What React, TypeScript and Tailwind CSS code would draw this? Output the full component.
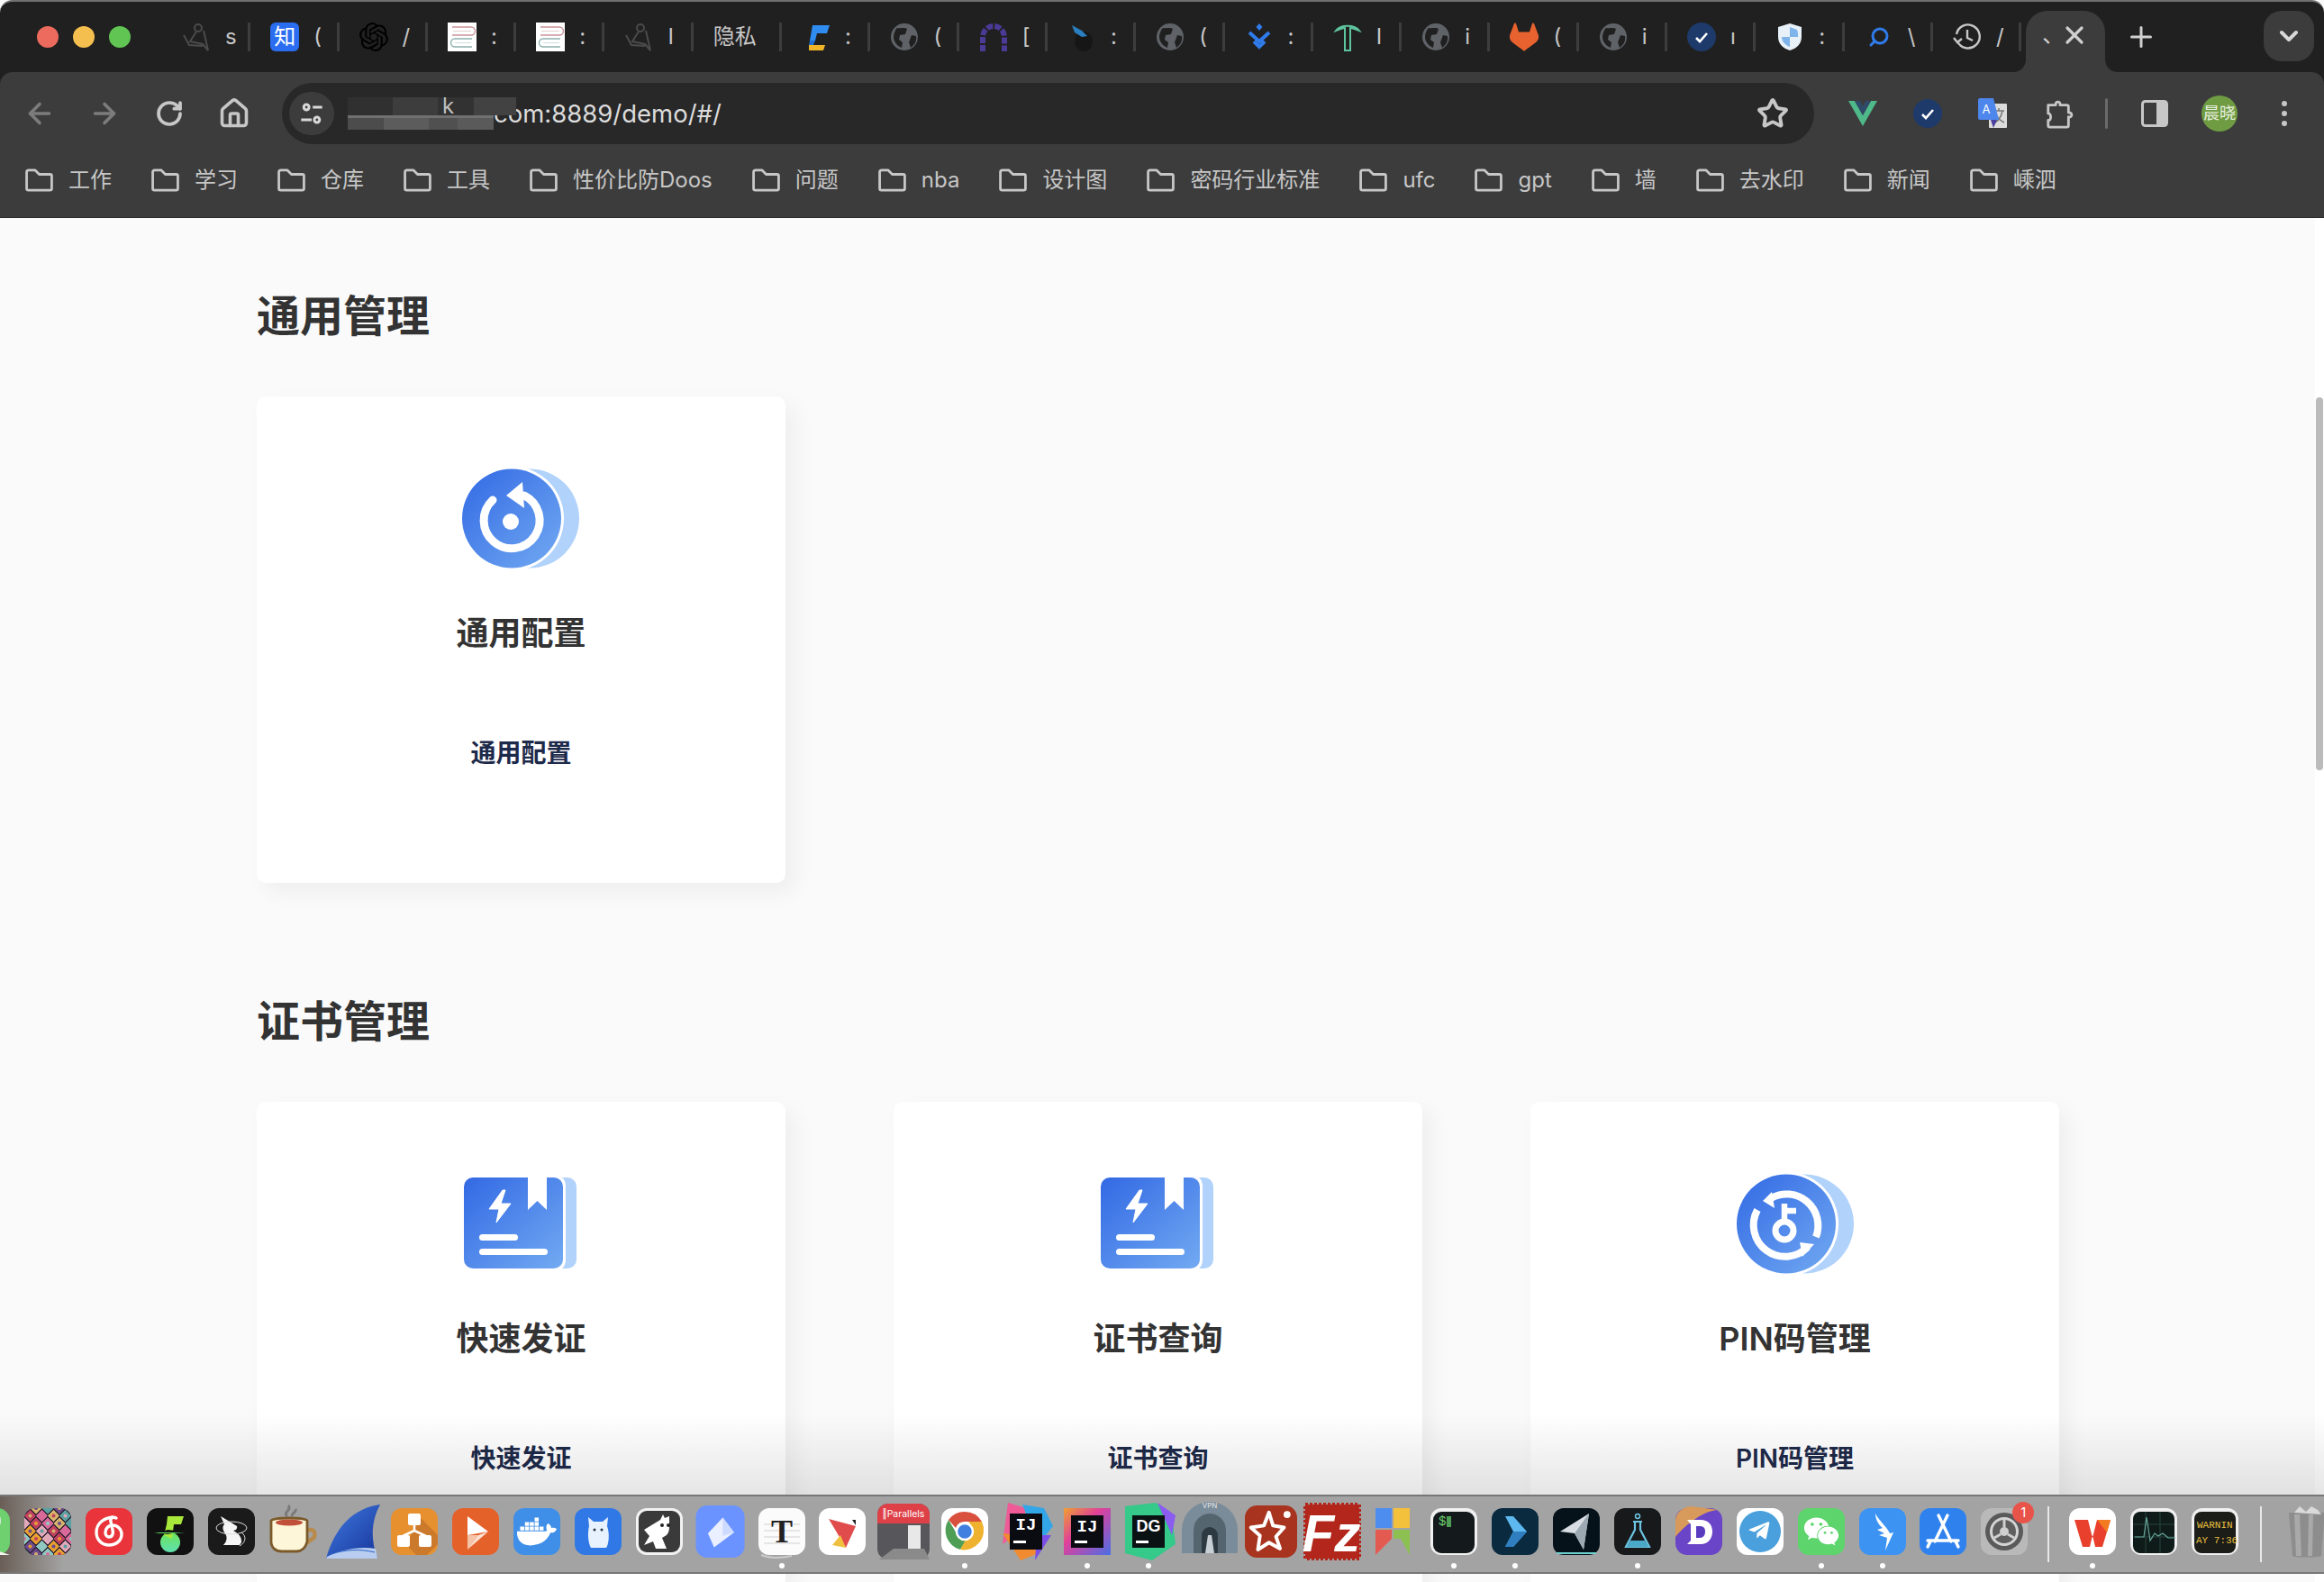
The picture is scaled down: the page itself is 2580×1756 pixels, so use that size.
import type { ReactNode } from "react";
import { ArrowLeft, ArrowRight, ChevronDown, Home, Plus, RotateCw, Search, Star, X } from "lucide-react";
import { FaDocker, FaTelegramPlane, FaWeixin } from "react-icons/fa";
import { SiGitlab, SiOpenai } from "react-icons/si";

const Globe = () => (
  <svg viewBox="0 0 32 32" className="h-8 w-8">
    <circle cx="16" cy="16" r="15" fill="#5f6368" />
    <path d="M8 6c4 1 8-1 11 1l-2 6-6 1-1 5 4 3-1 6c-5-2-9-7-9-12 0-4 2-8 4-10zM24 14l5 1c1 6-2 10-6 13l-2-6 3-8z" fill="#202020" />
  </svg>
);

const Bird = () => (
  <svg viewBox="0 0 32 32" className="h-8 w-8" fill="none" stroke="#4b4b4b" strokeWidth="2">
    <circle cx="18" cy="6" r="4" />
    <path d="M16 10 9 21l14 3 6 7-5-22M2 14l6 11 15 1" />
  </svg>
);

const Books = () => (
  <svg viewBox="0 0 32 32" className="h-8 w-8">
    <rect width="32" height="32" fill="#fff" />
    <path d="M5 5h21a3.500 3.500 0 0 1 0 9H5" fill="none" stroke="#c9939b" strokeWidth="1.400" />
    <path d="M6 9.500h20" fill="none" stroke="#e4d0d3" strokeWidth="1" />
    <path d="M27 18H8a3.500 3.500 0 0 0 0 9h19" fill="none" stroke="#8fb0ae" strokeWidth="1.400" />
    <path d="M8 22.500h18" fill="none" stroke="#d0dedd" strokeWidth="1" />
  </svg>
);

const CheckBadge = ({ size = "h-8 w-8" }: { size?: string }) => (
  <svg viewBox="0 0 32 32" className={size}>
    <circle cx="16" cy="16" r="16" fill="#1e3a6b" />
    <path d="m10 17 4 4 8-9" fill="none" stroke="#fff" strokeWidth="2.600" />
  </svg>
);

const tabs: { icon: ReactNode; text: string }[] = [
  { icon: <Bird />, text: "s" },
  {
    icon: (
      <span className="flex h-8 w-8 items-center justify-center rounded-[6px] bg-[#2b6df0] text-[24px] leading-none text-white">知</span>
    ),
    text: "(",
  },
  { icon: <SiOpenai className="h-8 w-8 text-black" />, text: "/" },
  { icon: <Books />, text: ":" },
  { icon: <Books />, text: ":" },
  { icon: <Bird />, text: "I" },
  { icon: <span className="block w-[52px] whitespace-nowrap text-[24px] leading-8 text-[#c7c7c7]">隐私</span>, text: "" },
  {
    icon: (
      <svg viewBox="0 0 32 32" className="h-8 w-8">
        <path d="M12 3h19l-3 9H17l-2 8h-6z" fill="#2f8cf0" />
        <path d="m9 20h6l-2 5H8z" fill="#1f6fd0" />
        <path d="M8 25h18l-2 6H8z" fill="#f0b429" />
      </svg>
    ),
    text: ":",
  },
  { icon: <Globe />, text: "(" },
  {
    icon: (
      <svg viewBox="0 0 32 32" className="h-8 w-8" fill="none" stroke="#4b3a96" strokeWidth="6">
        <path d="M4 32V16a12 12 0 0 1 24 0v16" strokeDasharray="7 2" />
      </svg>
    ),
    text: "[",
  },
  {
    icon: (
      <svg viewBox="0 0 32 32" className="h-8 w-8">
        <ellipse cx="18" cy="21" rx="10" ry="11" fill="#161616" />
        <path d="M5 3l11 6 6 6-6 1-8-5z" fill="#2a7fc0" />
      </svg>
    ),
    text: ":",
  },
  { icon: <Globe />, text: "(" },
  {
    icon: (
      <svg viewBox="0 0 32 32" className="h-8 w-8" fill="none" stroke="#2f7bea" strokeWidth="4">
        <path d="m16 1 3.500 4-3.500 4-3.500-4z" fill="#2f7bea" stroke="none" />
        <path d="M5 11l11 10 11-10M10 21l6 6 6-6" />
      </svg>
    ),
    text: ":",
  },
  {
    icon: (
      <svg viewBox="0 0 32 32" className="h-8 w-8" fill="none" stroke="#5fc5a0" strokeWidth="2">
        <path d="M3 9c5-7 21-7 26 0-5-2-8-3-10-3v25h-6V6c-2 0-5 1-10 3z" />
      </svg>
    ),
    text: "I",
  },
  { icon: <Globe />, text: "i" },
  { icon: <SiGitlab className="h-8 w-8 text-[#e8622f]" />, text: "(" },
  { icon: <Globe />, text: "i" },
  { icon: <CheckBadge />, text: "ı" },
  {
    icon: (
      <svg viewBox="0 0 32 32" className="h-8 w-8">
        <path d="M16 1 29 5v11c0 8-6 13-13 15C9 29 3 24 3 16V5z" fill="#e8f0f8" />
        <path d="M16 5v11h9c0-3 0-6-1-8zM16 16H7c0 5 4 9 9 11z" fill="#7fb4ea" />
      </svg>
    ),
    text: ":",
  },
  {
    icon: (
      <span className="flex h-8 w-8 items-center justify-center">
        <Search className="h-6 w-6 -scale-x-100 text-[#2f7bea]" strokeWidth={3} />
      </span>
    ),
    text: "\\",
  },
  {
    icon: (
      <svg viewBox="0 0 32 32" className="h-8 w-8" fill="none" stroke="#c7c7c7" strokeWidth="2.400">
        <path d="M5 21a13 13 0 1 0-1-8M1 17l4 5 5-4M16 8v9l6 3" />
      </svg>
    ),
    text: "/",
  },
];

const bookmarks = ["工作", "学习", "仓库", "工具", "性价比防Doos", "问题", "nba", "设计图", "密码行业标准", "ufc", "gpt", "墙", "去水印", "新闻", "嵊泗"];

const Folder = () => (
  <svg viewBox="0 0 34 28" className="h-[26px] w-[33px] shrink-0" fill="none" stroke="#c7c7c7" strokeWidth="3">
    <path d="M2 4.500A2.500 2.500 0 0 1 4.500 2H12l5 5h13a2 2 0 0 1 2 2v15a2 2 0 0 1-2 2H4a2 2 0 0 1-2-2z" strokeLinejoin="round" />
  </svg>
);

function Tile({ bg, children, rx = 12 }: { bg: string; children?: ReactNode; rx?: number }) {
  return (
    <svg viewBox="0 0 52 52" className="h-[52px] w-[52px] overflow-visible">
      <rect x="0" y="0" width="52" height="52" rx={rx} fill={bg} />
      {children}
    </svg>
  );
}

const quilt = ["#d86a9a", "#e8a030", "#5aa0a0", "#c04060", "#8fc8c0", "#d6b26a", "#e0a8b8", "#6a4a8a"];

const Quilt = () => (
  <svg viewBox="0 0 52 52" className="h-[52px] w-[52px]">
    <defs>
      <clipPath id="quilt-clip">
        <rect width="52" height="52" rx="12" />
      </clipPath>
    </defs>
    <g clipPath="url(#quilt-clip)">
      <rect width="52" height="52" fill="#33243c" />
      {[0, 1, 2, 3, 4, 5, 6].map((r) =>
        [0, 1, 2, 3, 4].map((c) => {
          const x = c * 13 + (r % 2 ? 6.5 : 0);
          const y = r * 8.5;
          return (
            <g key={`${r}-${c}`}>
              <path d={`M${x} ${y - 7}l7 7-7 7-7-7z`} fill={quilt[(r * 3 + c * 5) % 8]} stroke="#2a1f30" strokeWidth="0.800" />
              <circle cx={x} cy={y} r="2" fill={quilt[(r + c * 3 + 4) % 8]} />
            </g>
          );
        }),
      )}
    </g>
  </svg>
);

const dockApps: { node: ReactNode; dot?: boolean }[] = [
  {
    node: (
      <Tile bg="#6fd06f" rx={14}>
        <path d="M0 34 52 52H20L0 42z" fill="#f5f5ef" />
        <circle cx="30" cy="14" r="12" fill="#dfe8df" />
      </Tile>
    ),
  },
  { node: <Quilt /> },
  {
    node: (
      <Tile bg="#e8343a">
        <path d="M30 10c-9 1-18 6-18 17 0 9 7 14 14 14 8 0 14-5 14-12 0-6-5-10-10-10-5 0-8 4-8 8 0 3 2 5 4 5 4 0 5-4 4-8l-2-9c-1-4 2-6 6-4" fill="none" stroke="#fff" strokeWidth="3.400" strokeLinecap="round" />
      </Tile>
    ),
  },
  {
    node: (
      <Tile bg="#111">
        <defs>
          <linearGradient id="note-g" x1="0" y1="0" x2="0" y2="1">
            <stop offset="0" stopColor="#6ee45a" />
            <stop offset="1" stopColor="#5fe0b0" />
          </linearGradient>
        </defs>
        <circle cx="26" cy="38" r="11" fill="url(#note-g)" />
        <path d="M23 9h18l-3 9h-8l-2 16-9-4 3-12z" fill="#a8e83a" />
        <path d="M8 27l12-2 3-1 20 2-14 2-6 1z" fill="#111" />
        <path d="M8 27h35l-14 1H14z" fill="#62e06a" />
      </Tile>
    ),
  },
  {
    node: (
      <Tile bg="#1a1a1a">
        <path d="M14 9 24 15 32 20Q33 24 28 25 38 30 37 38L35 41H17Q22 36 20 30 14 22 18 18z" fill="#f5f5f5" />
        <ellipse cx="26" cy="22" rx="17" ry="7" fill="none" stroke="#ddd" strokeWidth="1" />
        <path d="M37 27c6 4 5 11-2 15" fill="none" stroke="#ddd" strokeWidth="1" />
      </Tile>
    ),
  },
  {
    node: (
      <svg viewBox="0 0 52 52" className="h-[52px] w-[52px] overflow-visible">
        <path d="M21 9c-6-4 6-7 1-12M27 9c-3-3 5-4 3-8" fill="none" stroke="#7a7a7a" strokeWidth="3" />
        <path d="M42 24h5c6 0 6 9 0 11l-6 5" fill="none" stroke="#b88a4c" strokeWidth="4.500" />
        <path d="M3 14c3-4 37-4 40 0v23c-2 8-7 11-12 11H15C8 48 3 44 3 37z" fill="#fdf6d8" stroke="#7b5a2a" strokeWidth="2.800" />
        <ellipse cx="23" cy="16" rx="15" ry="3.500" fill="#c0503a" />
      </svg>
    ),
  },
  {
    node: (
      <svg viewBox="0 0 60 60" className="h-[60px] w-[60px] overflow-visible">
        <defs>
          <linearGradient id="fin-g" x1="0" y1="0" x2="1" y2="1">
            <stop offset="0" stopColor="#3f7ce0" />
            <stop offset="1" stopColor="#17339a" />
          </linearGradient>
        </defs>
        <path d="M60 0C30 4 10 25 0 60H57C50 40 49 20 60 0z" fill="url(#fin-g)" />
        <path d="M1 58C16 50 38 46 55 49L57 60H0z" fill="#b8cdf0" />
        <path d="M6 55C20 50 38 49 54 53" fill="none" stroke="#2a61c8" strokeWidth="1" />
      </svg>
    ),
  },
  {
    node: (
      <Tile bg="#e6902f">
        <path d="M26 22 17 41l11 11h12l12-12V30L33 11z" fill="#bf6f2a" opacity=".7" />
        <path d="M26 18v7M26 25 13 31M26 25l13 6" stroke="#fff" strokeWidth="2.500" />
        <rect x="19" y="6" width="14" height="13" rx="2" fill="#fff" />
        <rect x="7" y="30" width="14" height="13" rx="2" fill="#fff" />
        <rect x="31" y="30" width="14" height="13" rx="2" fill="#fff" />
      </Tile>
    ),
  },
  {
    node: (
      <Tile bg="#e5612a">
        <path d="M17 9 40 26 17 30z" fill="#fff" />
        <path d="M17 30 29 30 17 46z" fill="#f5c4a8" />
        <path d="M29 30 40 26 17 46z" fill="#fbe2d2" />
      </Tile>
    ),
  },
  {
    node: (
      <span className="flex h-[52px] w-[52px] items-center justify-center rounded-[12px] bg-[#3f8fe8] text-white">
        <FaDocker className="h-11 w-11" />
      </span>
    ),
  },
  {
    node: (
      <Tile bg="#2f78e6">
        <path d="M16 20 15 10l6 5h10l6-5-1 10c3 8 2 20-1 24H18c-3-5-4-16-2-24z" fill="#e8f2ff" />
        <circle cx="22" cy="24" r="1.500" fill="#234" />
        <circle cx="30" cy="24" r="1.500" fill="#234" />
      </Tile>
    ),
  },
  {
    node: (
      <Tile bg="#f2f2f2">
        <rect x="3" y="3" width="46" height="46" rx="9" fill="#3a3a3a" />
        <path d="M9 24 27 13l3-6 2 4 5-2v12c0 9-5 10-8 12l5 12H22l-3-8-10 4 6-10z" fill="#fff" />
        <circle cx="29" cy="19" r="2" fill="#222" />
        <circle cx="36" cy="19" r="2" fill="#222" />
      </Tile>
    ),
  },
  {
    node: (
      <svg viewBox="0 0 56 60" className="h-[58px] w-[55px] overflow-visible">
        <rect width="56" height="60" rx="13" fill="#6b93ff" />
        <path d="M31 14 44 31 21 48 14 32z" fill="#eaf0ff" />
        <path d="M31 14 44 31 31 35z" fill="#ccdbff" />
      </svg>
    ),
  },
  {
    node: (
      <Tile bg="#fbfbfb">
        <path d="M3 52c10 4 24 3 34 1" stroke="#ccc" fill="none" strokeWidth="2" />
        <path d="M6 18h40M6 25h40M6 32h40M6 39h40" stroke="#e6e6e6" strokeWidth="2" />
        <text x="26" y="38" textAnchor="middle" fontFamily="Liberation Serif, serif" fontSize="36" fontWeight="700" fill="#222">T</text>
      </Tile>
    ),
    dot: true,
  },
  {
    node: (
      <Tile bg="#fff">
        <path d="M11 12 41 20l-11 24z" fill="#e04c4c" />
        <path d="M24 30 30 44 15 41z" fill="#f0c040" />
        <path d="M37 13h4v6z" fill="#222" />
      </Tile>
    ),
  },
  {
    node: (
      <svg viewBox="0 0 58 62" className="h-[62px] w-[58px] overflow-visible">
        <rect width="58" height="62" rx="12" fill="#57575b" />
        <path d="M0 12a12 12 0 0 1 12-12h34a12 12 0 0 1 12 12v10H0z" fill="#de4048" />
        <text x="29" y="15" textAnchor="middle" fontFamily="Inter, sans-serif" fontSize="10.500" fill="#fff">‖Parallels</text>
        <rect x="34" y="24" width="14" height="26" fill="#e8e8e8" />
        <path d="M2 62 18 50h34l6 12z" fill="#8a8a8a" />
      </svg>
    ),
  },
  {
    node: (
      <Tile bg="#fff">
        <path d="M26 4a22 22 0 0 1 19 11H26a11 11 0 0 0-10 7L8 13A22 22 0 0 1 26 4z" fill="#d9503f" />
        <path d="M8 13l10 17a10 10 0 0 0 9 6l-6 10A22 22 0 0 1 8 13z" fill="#4f9e55" />
        <path d="M45 15a22 22 0 0 1-24 31l9-16a10 10 0 0 0 0-15z" fill="#eeb22f" />
        <circle cx="26" cy="26" r="9" fill="#3f7fe0" stroke="#fff" strokeWidth="2.500" />
      </Tile>
    ),
    dot: true,
  },
  {
    node: (
      <svg viewBox="0 0 52 52" className="h-[52px] w-[52px] overflow-visible">
        <path d="M6-6 26 0 20 26 0 40z" fill="#ef5b97" />
        <path d="M22-4 46 0 56 20 40 40z" fill="#33a6e8" />
        <path d="M0 28 20 58 40 50 20 30z" fill="#f28b30" />
        <path d="M38 30 54 30 36 58z" fill="#7a4fe8" />
        <rect x="8" y="6" width="36" height="40" fill="#0b0b12" />
        <text x="26" y="24" textAnchor="middle" fontFamily="Liberation Mono, monospace" fontSize="19" fontWeight="700" fill="#fff">IJ</text>
        <rect x="12" y="36" width="14" height="3" fill="#fff" />
      </svg>
    ),
  },
  {
    node: (
      <svg viewBox="0 0 52 52" className="h-[52px] w-[52px] overflow-visible">
        <rect x="0" y="0" width="52" height="52" fill="url(#ijg)" />
        <defs>
          <linearGradient id="ijg" x1="0" y1="0" x2="1" y2="1">
            <stop offset="0" stopColor="#f0a030" />
            <stop offset=".4" stopColor="#e0409a" />
            <stop offset="1" stopColor="#4a6fe8" />
          </linearGradient>
        </defs>
        <rect x="8" y="8" width="36" height="36" fill="#0b0b12" />
        <text x="26" y="26" textAnchor="middle" fontFamily="Liberation Mono, monospace" fontSize="19" fontWeight="700" fill="#fff">IJ</text>
        <rect x="12" y="36" width="14" height="3" fill="#fff" />
      </svg>
    ),
    dot: true,
  },
  {
    node: (
      <svg viewBox="0 0 52 52" className="h-[52px] w-[52px] overflow-visible">
        <path d="M0-2 34-6 52 8 56 40 30 58 0 50z" fill="#35c98a" />
        <path d="M36-6 56 8 52 30z" fill="#8b5cf0" />
        <rect x="8" y="8" width="36" height="36" fill="#0b1214" />
        <text x="26" y="26" textAnchor="middle" fontFamily="Liberation Sans, sans-serif" fontSize="18" fontWeight="700" fill="#fff">DG</text>
        <rect x="12" y="36" width="14" height="3" fill="#fff" />
      </svg>
    ),
    dot: true,
  },
  {
    node: (
      <svg viewBox="0 0 52 52" className="h-[52px] w-[52px] overflow-visible">
        <path d="M-5 50V24a31 31 0 0 1 62 0v26H44V24a18 18 0 0 0-36 0v26z" fill="#7a8c9a" />
        <path d="M8 50V24a18 18 0 0 1 36 0v26z" fill="#55656f" />
        <path d="M17 50V30a9 9 0 0 1 18 0v20z" fill="#2e3a42" />
        <path d="M21 50 24 30h4l3 20z" fill="#c8d0d6" />
        <text x="26" y="0" textAnchor="middle" fontFamily="Inter, sans-serif" fontSize="8" fill="#e5e5e5">VPN</text>
      </svg>
    ),
  },
  {
    node: (
      <svg viewBox="0 0 52 52" className="h-[58px] w-[58px] overflow-visible">
        <rect width="52" height="52" rx="12" fill="#a8341f" />
        <path d="M24 7l4 13 11 2-8 9 4 12-11-6-11 7 2-14-9-8 13-2z" fill="none" stroke="#fff" strokeWidth="3.500" strokeLinejoin="round" />
        <circle cx="42" cy="9" r="3.500" fill="#fff" />
      </svg>
    ),
  },
  {
    node: (
      <svg viewBox="0 0 64 64" className="h-[64px] w-[64px] overflow-visible">
        <rect x="2" y="2" width="60" height="60" fill="#b3261b" stroke="#b3261b" strokeWidth="4" strokeDasharray="3 2" />
        <text x="31" y="54" textAnchor="middle" fontFamily="Liberation Sans, sans-serif" fontStyle="italic" fontSize="58" fontWeight="700" fill="#fff">Fz</text>
      </svg>
    ),
  },
  {
    node: (
      <svg viewBox="0 0 38 52" className="h-[52px] w-[38px] overflow-visible">
        <rect x="0" y="0" width="18" height="22" fill="#4e8df0" />
        <rect x="20" y="0" width="18" height="22" fill="#f4c13d" />
        <path d="M0 24h18v10L0 52z" fill="#e35b50" />
        <path d="M20 24h18v28L28 34h-8z" fill="#8cc152" />
      </svg>
    ),
  },
  {
    node: (
      <Tile bg="#f0f0f0">
        <rect x="3" y="4" width="46" height="46" rx="9" fill="#141a1c" />
        <text x="9" y="19" fontFamily="Liberation Mono, monospace" fontSize="14" fill="#6fd06f">$</text>
        <rect x="18" y="9" width="5" height="12" fill="#4f9e55" />
      </Tile>
    ),
    dot: true,
  },
  {
    node: (
      <Tile bg="#0a2a40">
        <path d="M15 9h9l15 17-15 17h-9l9-17z" fill="#5cb8ef" />
        <path d="M15 43h9l15-17H24z" fill="#2f7fc0" />
      </Tile>
    ),
    dot: true,
  },
  {
    node: (
      <Tile bg="#06121a">
        <path d="M40 6 34 46 24 28 8 26z" fill="#d8dee4" />
        <path d="M40 6 34 46 24 28z" fill="#9ca8b2" />
        <path d="M4 50h44" stroke="#6fd0d0" strokeWidth="2" />
      </Tile>
    ),
  },
  {
    node: (
      <Tile bg="#17191b">
        <circle cx="26" cy="9" r="2.500" fill="none" stroke="#6cc4e0" strokeWidth="1.500" />
        <path d="M21 15h10M23 15v9L13 43h26L29 24v-9" fill="none" stroke="#6cc4e0" strokeWidth="2.200" />
        <path d="M18 36h16l4 7H14z" fill="#4aa8c8" />
      </Tile>
    ),
    dot: true,
  },
  {
    node: (
      <Tile bg="#6a45c8" rx={13}>
        <path d="M0 14C0 4 10-2 18-2l30 4c-18 0-40 20-48 30z" fill="#d89a5a" />
        <path d="M13 13h15c8 0 13 5 13 13s-5 14-13 14H13l4-4V18z" fill="#fff" />
        <path d="M23 20h4c4 0 6 2 6 6s-2 7-6 7h-4z" fill="#5a3dbf" />
      </Tile>
    ),
  },
  {
    node: (
      <Tile bg="#fff">
        <circle cx="26" cy="26" r="23" fill="#4aa0dc" />
        <FaTelegramPlane x="12" y="12" size={26} color="#fff" />
      </Tile>
    ),
  },
  {
    node: (
      <span className="flex h-[52px] w-[52px] items-center justify-center rounded-[12px] bg-[#5dd46c] text-white">
        <FaWeixin className="h-10 w-10" />
      </span>
    ),
    dot: true,
  },
  {
    node: (
      <Tile bg="#3d93f2">
        <path d="M18 6c4 8 12 14 16 22l4-1-9 20 2-14-9-3 6-2-8-4 6-2c-5-4-8-10-8-16z" fill="#fff" />
      </Tile>
    ),
    dot: true,
  },
  {
    node: (
      <Tile bg="#2f82ee">
        <path d="M31 8 17 37M21 8l14 29M9 36h34M9 43l3-6M43 43l-3-6" fill="none" stroke="#fff" strokeWidth="3.400" strokeLinecap="round" />
      </Tile>
    ),
  },
  {
    node: (
      <span className="relative block h-[52px] w-[52px]">
        <svg viewBox="0 0 52 52" className="h-[52px] w-[52px]">
          <rect width="52" height="52" rx="12" fill="#b9b9b9" />
          <circle cx="26" cy="26" r="21" fill="#5a5a5a" />
          <circle cx="26" cy="26" r="16" fill="#d4d4d4" />
          <circle cx="26" cy="26" r="13" fill="#5f5f5f" />
          <circle cx="26" cy="26" r="5" fill="#cfcfcf" />
          <path d="M26 13v8M15 33l7-4M37 33l-7-4" stroke="#cfcfcf" strokeWidth="3" />
        </svg>
        <span className="absolute -right-[7px] -top-[7px] flex h-6 w-6 items-center justify-center rounded-full bg-[#e9544a] text-[14px] leading-none text-white">1</span>
      </span>
    ),
  },
];

const dockApps2: { node: ReactNode; dot?: boolean }[] = [
  {
    node: (
      <Tile bg="#fff">
        <path d="M6 13h15l5 20 5-20h15l-9 30h-8l-3-13-3 13h-8z" fill="#e8402d" />
        <path d="M31 13h15l-4 14z" fill="#f27b22" />
      </Tile>
    ),
    dot: true,
  },
  {
    node: (
      <Tile bg="#f0f0f0">
        <rect x="3" y="4" width="46" height="46" rx="8" fill="#0e1b19" />
        <path d="M3 18h46M3 32h46M17 4v46M33 4v46" stroke="#28453f" strokeWidth="1" />
        <path d="M5 32h10l3-22 4 26 5-8 4 3 5-3 6 5h8" fill="none" stroke="#66a79a" strokeWidth="1.200" />
      </Tile>
    ),
  },
  {
    node: (
      <Tile bg="#f0f0f0">
        <rect x="3" y="4" width="46" height="46" rx="8" fill="#1c1c18" />
        <text x="6" y="22" fontFamily="Liberation Mono, monospace" fontSize="11" fill="#e8c040">WARNIN</text>
        <text x="5" y="39" fontFamily="Liberation Mono, monospace" fontSize="11" fill="#e8c040">AY 7:36</text>
      </Tile>
    ),
  },
];

const DockItem = ({ node, dot }: { node: ReactNode; dot?: boolean }) => (
  <div className="flex w-[67.9px] shrink-0 flex-col items-center">
    <div className="flex h-[52px] w-[52px] items-center justify-center [&>*]:shrink-0">{node}</div>
    {dot ? <span className="mt-[9px] h-[6px] w-[6px] rounded-full bg-white" /> : null}
  </div>
);

function Dock() {
  return (
    <div className="absolute bottom-[9px] left-0 right-0 h-[88px] overflow-hidden border-y-2 border-[#777] bg-[#a3a3a3]">
      <div className="absolute inset-y-0 left-0 w-[70px] bg-gradient-to-r from-[#6a5f57] to-[#a3a3a3]" />
      <div className="relative -ml-[49px] flex items-start pt-[13px]">
        {dockApps.map((a, i) => (
          <DockItem key={i} node={a.node} dot={a.dot} />
        ))}
        <div className="flex w-[30px] shrink-0 justify-center">
          <span className="h-[62px] w-[2px] -translate-y-[2px] bg-[#e8e8e8]" />
        </div>
        {dockApps2.map((a, i) => (
          <DockItem key={i} node={a.node} dot={a.dot} />
        ))}
        <div className="flex w-[34px] shrink-0 justify-center">
          <span className="h-[62px] w-[2px] -translate-y-[2px] bg-[#e8e8e8]" />
        </div>
        <div className="flex h-[58px] w-[68px] shrink-0 -translate-y-[4px] items-start justify-center">
          <svg viewBox="0 0 44 58" className="h-[60px] w-[44px]">
            <path d="M2 8h40l-4 48c-1 2-31 2-32 0z" fill="#8d8d8d" />
            <path d="M8 10h6l2 46h-6zM24 10h5l-1 46h-5z" fill="#a9a9a9" />
            <path d="M8 8l6-7 7 6 6-6 7 4 4 5z" fill="#d9d9d9" />
          </svg>
        </div>
      </div>
    </div>
  );
}

const Pad = ({ children }: { children: ReactNode }) => (
  <div className="flex w-[72px] shrink-0 items-center justify-center">{children}</div>
);

function Chrome() {
  return (
    <header className="shrink-0 rounded-t-[14px] border-t-2 border-[#6f6f6f] bg-[#202020]">
      {/* tab strip */}
      <div className="flex h-[78px] items-start">
        <div className="flex w-[180px] shrink-0 gap-4 pl-[41px] pt-[27px]">
          <span className="h-6 w-6 rounded-full bg-[#ec6a5e]" />
          <span className="h-6 w-6 rounded-full bg-[#f4bf4f]" />
          <span className="h-6 w-6 rounded-full bg-[#61c554]" />
        </div>
        {tabs.map((t, i) => (
          <div key={i} className="mt-[23px] flex h-8 w-[98.3px] shrink-0 items-center border-r-[3px] border-[#3d3d3d] pl-[22px]">
            {t.icon}
            <span className="ml-[16px] text-[24px] leading-8 text-[#c7c7c7]">{t.text}</span>
          </div>
        ))}
        <div className="relative ml-[5px] mt-[10px] flex h-[68px] w-[88px] shrink-0 items-start rounded-t-[24px] bg-[#3c3c3c] pl-[18px] pt-[11px] text-[#d0d0d0]">
          <span className="text-[24px] leading-8">、</span>
          <X className="-ml-[4px] h-8 w-8" strokeWidth={2.400} />
          <svg viewBox="0 0 14 14" className="absolute -left-[14px] bottom-0 h-[14px] w-[14px]" fill="#3c3c3c">
            <path d="M14 0v14H0a14 14 0 0 0 14-14z" />
          </svg>
          <svg viewBox="0 0 14 14" className="absolute -right-[14px] bottom-0 h-[14px] w-[14px]" fill="#3c3c3c">
            <path d="M0 0v14h14A14 14 0 0 1 0 0z" />
          </svg>
        </div>
        <Plus className="ml-[22px] mt-[21px] h-9 w-9 shrink-0 text-[#d0d0d0]" strokeWidth={2} />
        <div className="ml-[118px] mt-[10px] flex h-[56px] w-[56px] shrink-0 items-center justify-center rounded-[20px] bg-[#3c3c3c] text-[#d8d8d8]">
          <ChevronDown className="h-8 w-8" strokeWidth={3} />
        </div>
      </div>

      <div className="rounded-t-[14px] border-b border-[#2a2a2a] bg-[#3c3c3c]">
        {/* address row */}
        <div className="flex h-[90px] items-center pl-2 pt-[2px]">
          <Pad>
            <ArrowLeft className="h-9 w-9 text-[#7c7c7c]" strokeWidth={2.400} />
          </Pad>
          <Pad>
            <ArrowRight className="h-9 w-9 text-[#7c7c7c]" strokeWidth={2.400} />
          </Pad>
          <Pad>
            <RotateCw className="h-8 w-8 text-[#c7c7c7]" strokeWidth={2.800} />
          </Pad>
          <Pad>
            <Home className="h-9 w-9 text-[#c7c7c7]" strokeWidth={2.400} />
          </Pad>
          <div className="ml-[17px] flex h-[68px] w-[1701px] shrink-0 items-center rounded-full bg-[#282828] pl-2 pr-[28px]">
            <div className="flex h-12 w-[50px] shrink-0 items-center justify-center rounded-full bg-[#3c3c3c]">
              <svg viewBox="0 0 24 24" className="h-7 w-7" fill="none" stroke="#d8d8d8" strokeWidth="2.600">
                <circle cx="7" cy="6" r="2.500" />
                <circle cx="17" cy="18" r="2.500" />
                <path d="M13 6h9M2 18h10" />
              </svg>
            </div>
            <div className="ml-[15px] flex h-9 w-[162px] shrink-0 flex-col">
              <div className="relative flex h-[20px] w-[187px]">
                <span className="w-[50px] bg-[#303030]" />
                <span className="w-[50px] bg-[#3d3d3d]" />
                <span className="w-[40px] bg-[#323232]" />
                <span className="w-[47px] bg-[#424242]" />
                <span className="absolute left-[105px] top-[-2px] text-[24px] leading-[24px] text-[#c0c0c0]">k</span>
              </div>
              <div className="flex h-[16px] border-t-[3px] border-[#707070]">
                <span className="w-[40px] bg-[#4c4c4c]" />
                <span className="w-[50px] bg-[#5c5c5c]" />
                <span className="w-[32px] bg-[#505050]" />
                <span className="w-[40px] bg-[#5a5a5a]" />
              </div>
            </div>
            <span className="text-[27.5px] leading-9 text-[#dcdcdc]">com:8889/demo/#/</span>
            <Star className="ml-auto h-9 w-9 shrink-0 text-[#c7c7c7]" strokeWidth={2.600} />
          </div>
          <div className="ml-[18px] flex items-center">
            <Pad>
              <svg viewBox="0 0 32 28" className="h-[28px] w-[32px]">
                <path d="M0 0h7l9 16 9-16h7L16 28z" fill="#4fb98a" />
                <path d="M7 0h6l3 6 3-6h6l-9 16z" fill="#2f4a68" />
              </svg>
            </Pad>
            <Pad>
              <CheckBadge size="h-8 w-8" />
            </Pad>
            <Pad>
              <svg viewBox="0 0 32 34" className="h-[34px] w-[32px]">
                <rect x="12" y="6" width="20" height="27" rx="1" fill="#dcdcdc" />
                <path d="M17 14h12M23 11v3M19 27c5-3 7-8 8-13M20 18c2 5 5 7 9 9" fill="none" stroke="#777" strokeWidth="1.500" />
                <path d="M14 24l7 0-4 9z" fill="#4a3fa0" />
                <path d="M2 0h15l6 24H2a2 2 0 0 1-2-2V2a2 2 0 0 1 2-2z" fill="#4d86ec" />
                <text x="9" y="17" textAnchor="middle" fontFamily="Inter, sans-serif" fontSize="13" fill="#fff">A</text>
              </svg>
            </Pad>
            <Pad>
              <svg viewBox="0 0 34 36" className="h-[34px] w-[32px] translate-x-[2px]" fill="none" stroke="#c7c7c7" strokeWidth="3">
                <path d="M4 8h9c-1-5 6-5 5 0h8a2 2 0 0 1 2 2v7c5-1 5 6 0 5v10a2 2 0 0 1-2 2H6a2 2 0 0 1-2-2v-6c4 1 4-9 0-8z" strokeLinejoin="round" />
              </svg>
            </Pad>
            <div className="flex w-[36px] shrink-0 justify-center">
              <span className="h-[34px] w-[3px] rounded-full bg-[#6a6a6a]" />
            </div>
            <Pad>
              <svg viewBox="0 0 30 30" className="h-[30px] w-[30px]">
                <rect x="1.500" y="1.500" width="27" height="27" rx="3" fill="#3c3c3c" stroke="#c7c7c7" strokeWidth="3" />
                <rect x="17" y="1.500" width="11.500" height="27" fill="#c7c7c7" />
              </svg>
            </Pad>
            <Pad>
              <span className="flex h-[40px] w-[40px] items-center justify-center rounded-full bg-[#6f9c43] text-[18px] leading-none text-[#e8f0df]">晨晓</span>
            </Pad>
            <Pad>
              <span className="flex flex-col gap-[5px]">
                <span className="h-[6px] w-[6px] rounded-full bg-[#c7c7c7]" />
                <span className="h-[6px] w-[6px] rounded-full bg-[#c7c7c7]" />
                <span className="h-[6px] w-[6px] rounded-full bg-[#c7c7c7]" />
              </span>
            </Pad>
          </div>
        </div>

        {/* bookmarks */}
        <div className="flex h-[71px] items-center gap-[43px] pb-[11px] pl-[27px]">
          {bookmarks.map((b) => (
            <div key={b} className="flex items-center gap-4 whitespace-nowrap text-[24px] leading-8 text-[#c7c7c7]">
              <Folder />
              {b}
            </div>
          ))}
        </div>
      </div>
    </header>
  );
}

const Shell = ({ id, children }: { id: string; children: ReactNode }) => (
  <svg viewBox="0 0 131 112" className="h-[112px] w-[131px]">
    <defs>
      <linearGradient id={id} x1="0" y1="0" x2="1" y2="1">
        <stop offset="0" stopColor="#3269e4" />
        <stop offset="1" stopColor="#72aaf2" />
      </linearGradient>
    </defs>
    {children}
  </svg>
);

const ResetIcon = () => (
  <Shell id="g-reset">
    <circle cx="75" cy="55.500" r="55" fill="#b0d2fb" />
    <circle cx="55" cy="55.500" r="58" fill="#fff" />
    <circle cx="55" cy="55.500" r="55" fill="url(#g-reset)" />
    <path d="M34 35A31 31 0 1 0 69 30" fill="none" stroke="#fff" strokeWidth="9" strokeLinecap="round" />
    <path d="M49 30 67 15 69 44z" fill="#fff" />
    <circle cx="54" cy="59" r="9" fill="#fff" />
  </Shell>
);

const BookIcon = ({ id }: { id: string }) => (
  <Shell id={id}>
    <rect x="30" y="4" width="97" height="101" rx="10" fill="#b0d2fb" />
    <rect x="-2" y="1" width="117" height="107" rx="12" fill="#fff" />
    <rect x="2" y="4" width="110" height="101" rx="10" fill={`url(#${id})`} />
    <path d="M73 2h21v38L83.500 30 73 40z" fill="#fff" />
    <path d="M45 18 30 39h11l-3 15 16-21H43l5-15z" fill="#fff" stroke="#fff" strokeWidth="1" strokeLinejoin="round" />
    <rect x="19" y="67" width="43" height="7" rx="3.500" fill="#fff" />
    <rect x="19" y="83" width="76" height="7" rx="3.500" fill="#fff" />
  </Shell>
);

const PinIcon = () => (
  <Shell id="g-pin">
    <circle cx="76" cy="55.500" r="55" fill="#b0d2fb" />
    <circle cx="56" cy="55.500" r="58" fill="#fff" />
    <circle cx="56" cy="55.500" r="55" fill="url(#g-pin)" />
    <path d="M39 27A35 35 0 0 1 89 70M24 40A35 35 0 0 0 80 81" fill="none" stroke="#fff" strokeWidth="8" />
    <path d="M30 30 40 20 43 38zM87 78 71 76 74 92z" fill="#fff" />
    <circle cx="54" cy="63" r="10" fill="none" stroke="#fff" strokeWidth="7" />
    <path d="M54 53V33M54 41h13" fill="none" stroke="#fff" strokeWidth="6.500" />
  </Shell>
);

function Card({ title, icon }: { title: string; icon: ReactNode }) {
  return (
    <div className="flex h-[540px] flex-col items-center rounded-[10px] bg-white pt-[80px] shadow-[10px_10px_24px_rgba(0,0,0,0.05)]">
      {icon}
      <h3 className="mt-[47px] text-[36px] font-semibold leading-[48px] text-[#333]">{title}</h3>
      <p className="mt-[89px] text-[28px] font-semibold leading-10 text-[#1e2a4a]">{title}</p>
    </div>
  );
}

const Section = ({ title, children }: { title: string; children: ReactNode }) => (
  <section>
    <h2 className="text-[48px] font-bold leading-[64px] text-[#333]">{title}</h2>
    <div className="mt-[57px] grid grid-cols-[587px_587px_587px] gap-x-[120px]">{children}</div>
  </section>
);

export default function App() {
  return (
    <div className="relative flex h-[1756px] w-[2580px] flex-col overflow-hidden bg-[#fafafa] font-['Inter','Noto_Sans_CJK_SC',sans-serif]">
      <Chrome />
      <main className="flex flex-1 flex-col gap-[122px] pl-[285px] pt-[77px]">
        <Section title="通用管理">
          <Card title="通用配置" icon={<ResetIcon />} />
        </Section>
        <Section title="证书管理">
          <Card title="快速发证" icon={<BookIcon id="g-book1" />} />
          <Card title="证书查询" icon={<BookIcon id="g-book2" />} />
          <Card title="PIN码管理" icon={<PinIcon />} />
        </Section>
      </main>

      {/* scrollbar */}
      <div className="absolute bottom-0 right-0 top-[242px] w-[10px] bg-white">
        <div className="ml-px mt-[199px] h-[414px] w-2 rounded-full bg-[#bbb]" />
      </div>

      {/* dock shade */}
      <div className="absolute bottom-[97px] left-0 right-0 h-[90px] bg-gradient-to-b from-transparent to-black/10" />
      <Dock />
    </div>
  );
}
